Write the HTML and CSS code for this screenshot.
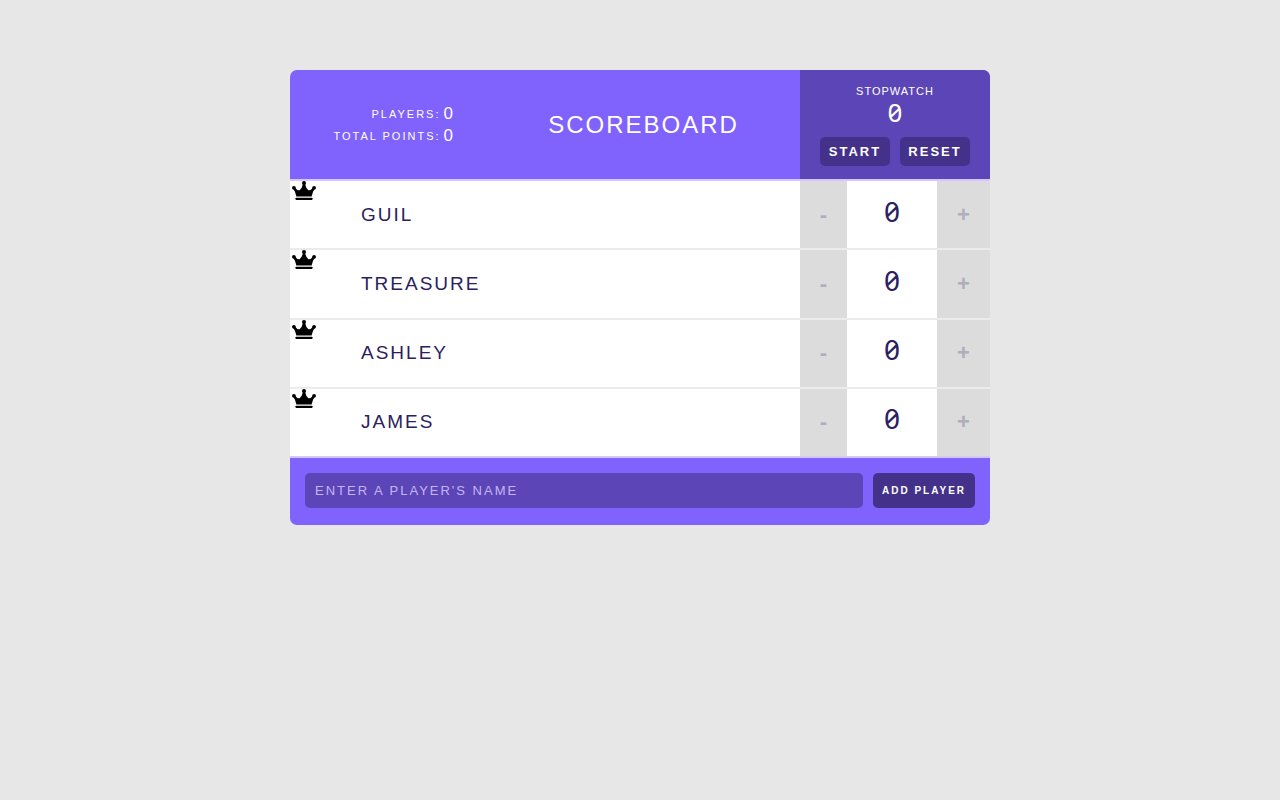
FILE: index.html
```html
<!DOCTYPE html>
<html lang="en">
<head>
<meta charset="utf-8">
<title>Scoreboard</title>
<link rel="stylesheet" href="styles.css">
</head>
<body>
<svg class="defs" aria-hidden="true"><symbol id="crown" viewBox="0 0 24 19"><g fill="currentColor"><circle cx="12" cy="2" r="2"/><circle cx="1.9" cy="6.8" r="1.9"/><circle cx="22.1" cy="6.8" r="1.9"/><path d="M1.4 8L3 6.6Q5.4 10 7.6 9.2Q10.2 7 10.9 3h2.2Q13.8 7 16.4 9.2Q18.6 10 21 6.6L22.6 8Q20.4 11 19.6 15.6H4.4Q3.6 11 1.4 8z"/><rect x="3.6" y="16.8" width="16.8" height="2.2" rx=".4"/></g></symbol></svg>
<main class="scoreboard">
  <header class="header">
    <table class="stats">
      <tbody>
        <tr><td>Players:</td><td class="stats-value">0</td></tr>
        <tr><td>Total Points:</td><td class="stats-value">0</td></tr>
      </tbody>
    </table>
    <h1 class="title">Scoreboard</h1>
    <section class="stopwatch">
      <h2 class="stopwatch-title">Stopwatch</h2>
      <span class="stopwatch-time">0</span>
      <div class="stopwatch-actions"><button type="button" class="button">Start</button><button type="button" class="button">Reset</button></div>
    </section>
  </header>
  <div class="players">
    <div class="player">
      <div class="player-name"><svg class="crown"><use href="#crown"/></svg><span>Guil</span></div>
      <div class="counter"><button type="button" class="counter-action">-</button><span class="counter-score">0</span><button type="button" class="counter-action">+</button></div>
    </div>
    <div class="player">
      <div class="player-name"><svg class="crown"><use href="#crown"/></svg><span>Treasure</span></div>
      <div class="counter"><button type="button" class="counter-action">-</button><span class="counter-score">0</span><button type="button" class="counter-action">+</button></div>
    </div>
    <div class="player">
      <div class="player-name"><svg class="crown"><use href="#crown"/></svg><span>Ashley</span></div>
      <div class="counter"><button type="button" class="counter-action">-</button><span class="counter-score">0</span><button type="button" class="counter-action">+</button></div>
    </div>
    <div class="player">
      <div class="player-name"><svg class="crown"><use href="#crown"/></svg><span>James</span></div>
      <div class="counter"><button type="button" class="counter-action">-</button><span class="counter-score">0</span><button type="button" class="counter-action">+</button></div>
    </div>
  </div>
  <form class="add-player">
    <input class="name-input" type="text" placeholder="Enter a player's name" aria-label="Enter a player's name">
    <button type="submit" class="button add-button">Add Player</button>
  </form>
</main>
</body>
</html>
```
FILE: styles.css
```css
* { box-sizing: border-box; }
body {
  margin: 0;
  padding: 70px 20px;
  background: #e7e7e7;
  color: #fff;
  font-family: "Liberation Sans", Arial, sans-serif;
  text-transform: uppercase;
}
button, input { font: inherit; letter-spacing: inherit; text-transform: inherit; border: 0; }
.defs { position: absolute; width: 0; height: 0; }
.scoreboard {
  max-width: 700px;
  margin: 0 auto;
  overflow: hidden;
  border-radius: 7px;
  background: #8062fc;
}
.header {
  display: grid;
  grid-template-columns: 1fr 347px 190px;
  align-items: center;
  border-bottom: 2px solid #d2c7fe;
}
.stats {
  justify-self: end;
  border-spacing: 0;
  font-size: 11px;
  line-height: 22px;
  letter-spacing: 2px;
  text-align: right;
}
.stats td { padding: 0; }
.stats .stats-value { padding-left: 3px; font-size: 17px; letter-spacing: 0; }
.title {
  margin: 0;
  padding-left: 34px;
  font-size: 24px;
  font-weight: 400;
  letter-spacing: 2px;
  text-align: center;
}
.stopwatch {
  padding: 15px 20px 13px;
  background: #5c45b7;
  text-align: center;
}
.stopwatch-title { margin: 0; font-size: 11px; font-weight: 400; line-height: 12px; letter-spacing: 1px; }
.stopwatch-time,
.counter-score {
  font-family: "Noto Sans", "DejaVu Sans Mono", monospace;
  font-feature-settings: "zero";
}
.stopwatch-time { display: block; font-size: 26px; line-height: 30px; }
.stopwatch-actions { display: grid; grid-template-columns: 1fr 1fr; gap: 10px; padding-top: 10px; }
.button {
  padding: 6px 0;
  border-radius: 5px;
  background: #44328a;
  color: #fff;
  font-size: 13px;
  font-weight: 700;
  line-height: 17px;
  letter-spacing: 2px;
}
.players { display: grid; grid-auto-rows: 1fr; min-height: 277px; background: #fff; color: #2c2060; }
.player { display: flex; border-bottom: 2px solid #ebebeb; }
.player:last-child { border-color: #d2c7fe; }
.player-name { flex: 1; display: flex; align-items: center; font-size: 19px; letter-spacing: 2px; }
.crown { align-self: flex-start; width: 24px; height: 19px; margin: 0 45px 0 2px; color: #000; }
.counter { display: grid; grid-template-columns: 47px 90px 53px; width: 190px; }
.counter-action { padding: 0; background: #dcdcdc; color: #b0adbd; font-size: 22px; font-weight: 700; }
.counter-score { align-self: center; padding-bottom: 8px; font-size: 28px; line-height: 32px; text-align: center; }
.add-player { display: flex; gap: 10px; padding: 15px 15px 17px; }
.name-input {
  flex: 1;
  min-width: 0;
  padding: 9px 10px;
  border-radius: 5px;
  background: #5c45b7;
  color: #fff;
  font-size: 13px;
  line-height: 17px;
  letter-spacing: 2px;
}
.name-input::placeholder { color: #c5b5f6; opacity: 1; }
.add-button { width: 102px; font-size: 10px; }
```
